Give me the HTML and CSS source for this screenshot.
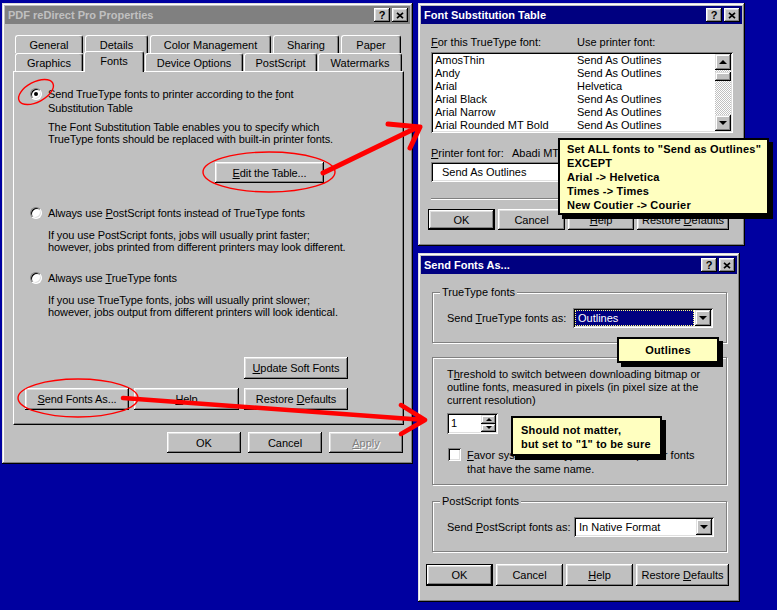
FILE: index.html
```html
<!DOCTYPE html>
<html>
<head>
<meta charset="utf-8">
<title>Font settings</title>
<link rel="stylesheet" href="styles.css">
</head>
<body>

<div class="win w-props">
  <div class="titlebar inactive">
    <span class="t">PDF reDirect Pro Properties</span>
    <span class="tbtn">?</span>
    <span class="tbtn x"><svg width="8" height="7" viewBox="0 0 8 7"><path d="M1 0.8L7 6.2M7 0.8L1 6.2" stroke="#000" stroke-width="1.7"/></svg></span>
  </div>
  <div class="tabrow r1">
    <div class="tab tw-general">General</div>
    <div class="tab tw-details">Details</div>
    <div class="tab tw-color">Color Management</div>
    <div class="tab tw-sharing">Sharing</div>
    <div class="tab tw-paper">Paper</div>
  </div>
  <div class="tabrow r2">
    <div class="tab tw-graphics">Graphics</div>
    <div class="tab sel tw-fonts">Fonts</div>
    <div class="tab tw-device">Device Options</div>
    <div class="tab tw-ps">PostScript</div>
    <div class="tab tw-wm">Watermarks</div>
  </div>
  <div class="panel">
    <div class="opt">
      <span class="radio on"><span class="dot"></span></span>
      <span>Send TrueType fonts to printer according to the <u>f</u>ont<br>Substitution Table</span>
    </div>
    <div class="desc d1">The Font Substitution Table enables you to specify which<br>TrueType fonts should be replaced with built-in printer fonts.</div>
    <div class="btn b-edit"><span><u>E</u>dit the Table...</span></div>

    <div class="opt o2">
      <span class="radio"></span>
      <span>Always use <u>P</u>ostScript fonts instead of TrueType fonts</span>
    </div>
    <div class="desc d2">If you use PostScript fonts, jobs will usually print faster;<br>however, jobs printed from different printers may look different.</div>

    <div class="opt o3">
      <span class="radio"></span>
      <span>Always use <u>T</u>rueType fonts</span>
    </div>
    <div class="desc d2">If you use TrueType fonts, jobs will usually print slower;<br>however, jobs output from different printers will look identical.</div>

    <div class="pbtns">
      <div class="btn c3"><span><u>U</u>pdate Soft Fonts</span></div>
      <div class="btn"><span><u>S</u>end Fonts As...</span></div>
      <div class="btn"><span><u>H</u>elp</span></div>
      <div class="btn"><span>Restore <u>D</u>efaults</span></div>
    </div>
  </div>
  <div class="dlgbtns">
    <div class="btn b75">OK</div>
    <div class="btn b75">Cancel</div>
    <div class="btn b75 dis"><span><u>A</u>pply</span></div>
  </div>
</div>

<div class="win w-fst">
  <div class="titlebar">
    <span class="t">Font Substitution Table</span>
    <span class="tbtn">?</span>
    <span class="tbtn x"><svg width="8" height="7" viewBox="0 0 8 7"><path d="M1 0.8L7 6.2M7 0.8L1 6.2" stroke="#000" stroke-width="1.7"/></svg></span>
  </div>
  <div class="fst-body">
    <div class="cols"><span class="c1"><u>F</u>or this TrueType font:</span><span>Use printer font:</span></div>
    <div class="list sunk">
      <div class="rows">
        <div class="lrow"><span class="lc1">AmosThin</span><span>Send As Outlines</span></div>
        <div class="lrow"><span class="lc1">Andy</span><span>Send As Outlines</span></div>
        <div class="lrow"><span class="lc1">Arial</span><span>Helvetica</span></div>
        <div class="lrow"><span class="lc1">Arial Black</span><span>Send As Outlines</span></div>
        <div class="lrow"><span class="lc1">Arial Narrow</span><span>Send As Outlines</span></div>
        <div class="lrow"><span class="lc1">Arial Rounded MT Bold</span><span>Send As Outlines</span></div>
      </div>
      <div class="sb">
        <div class="sbb"><span class="tri up"></span></div>
        <div class="track"><div class="thumb"></div></div>
        <div class="sbb"><span class="tri"></span></div>
      </div>
    </div>
    <div class="pf-row"><span class="pf1"><u>P</u>rinter font for:</span><span>Abadi MT</span></div>
    <div class="combo sunk">
      <span class="f">Send As Outlines</span>
      <span class="arr"><span class="tri"></span></span>
    </div>
    <div class="sep"></div>
    <div class="fbtns">
      <div class="btn def w67">OK</div>
      <div class="btn w67">Cancel</div>
      <div class="btn w66"><span><u>H</u>elp</span></div>
      <div class="btn w92"><span>Restore <u>D</u>efaults</span></div>
    </div>
  </div>
</div>

<div class="win w-sfa">
  <div class="titlebar">
    <span class="t">Send Fonts As...</span>
    <span class="tbtn">?</span>
    <span class="tbtn x"><svg width="8" height="7" viewBox="0 0 8 7"><path d="M1 0.8L7 6.2M7 0.8L1 6.2" stroke="#000" stroke-width="1.7"/></svg></span>
  </div>
  <div class="grp g1">
    <span class="glabel">TrueType fonts</span>
    <div class="grow">
      <span class="gl1">Send <u>T</u>rueType fonts as:</span>
      <div class="dd sunk">
        <span class="f sel">Outlines</span>
        <span class="arr"><span class="tri"></span></span>
      </div>
    </div>
  </div>
  <div class="grp g2">
    <div class="thr">T<u>h</u>reshold to switch between downloading bitmap or<br>outline fonts, measured in pixels (in pixel size at the<br>current resolution)</div>
    <div class="spin sunk">
      <span class="sp-val">1</span>
      <span class="sp-btns">
        <span class="spb"><span class="tri sm up"></span></span>
        <span class="spb"><span class="tri sm"></span></span>
      </span>
    </div>
    <div class="chk">
      <span class="cb sunk"></span>
      <span><u>F</u>avor system TrueType fonts over printer fonts<br>that have the same name.</span>
    </div>
  </div>
  <div class="grp g3">
    <span class="glabel">PostScript fonts</span>
    <div class="grow">
      <span class="gl1">Send <u>P</u>ostScript fonts as:</span>
      <div class="dd sunk">
        <span class="f">In Native Format</span>
        <span class="arr"><span class="tri"></span></span>
      </div>
    </div>
  </div>
  <div class="sbtns">
    <div class="btn def w67">OK</div>
    <div class="btn w67">Cancel</div>
    <div class="btn w67"><span><u>H</u>elp</span></div>
    <div class="btn w93"><span>Restore <u>D</u>efaults</span></div>
  </div>
</div>

<div class="tip tip1">Set ALL fonts to "Send as Outlines"<br>EXCEPT<br>Arial -&gt; Helvetica<br>Times -&gt; Times<br>New Coutier -&gt; Courier</div>
<div class="tip tip2">Should not matter,<br>but set to "1" to be sure</div>
<div class="tip tip3">Outlines</div>

<svg class="marks" width="777" height="610" viewBox="0 0 777 610">
  <g fill="none" stroke="#ff0000">
    <ellipse cx="36" cy="92" rx="19" ry="10" transform="rotate(-28 36 92)" stroke-width="1.4"/>
    <ellipse cx="269" cy="172" rx="66" ry="20" stroke-width="1.4"/>
    <ellipse cx="78" cy="398" rx="60" ry="19" stroke-width="1.4"/>
    <g stroke-linecap="round" stroke-linejoin="round">
      <path d="M323 173 L418 127 M388 124 L420 127 L410 148" stroke-width="5"/>
      <path d="M123 398 L425 420 M401 405 L425 420 L401 434" stroke-width="4.5"/>
    </g>
  </g>
</svg>

</body>
</html>
```

FILE: styles.css
```css
* { box-sizing: border-box; }
html, body { margin: 0; padding: 0; }
body {
  width: 777px;
  height: 610px;
  position: relative;
  overflow: hidden;
  background: #0000a0;
  font-family: "Liberation Sans", Arial, sans-serif;
  font-size: 11px;
  color: #000;
}
u { text-decoration: underline; text-underline-offset: 1px; }

/* windows */
.win {
  position: absolute;
  background: #c0c0c0;
  padding: 3px;
  box-shadow: inset -1px -1px #000, inset 1px 1px #dfdfdf, inset -2px -2px #808080, inset 2px 2px #fff;
}
.w-props { left: 2px; top: 3px; width: 411px; height: 461px; }
.w-fst { left: 418px; top: 3px; width: 327px; height: 243px; }
.w-sfa { left: 418px; top: 253px; width: 322px; height: 349px; }

.titlebar {
  height: 18px;
  display: flex;
  align-items: center;
  padding: 0 2px 0 3px;
  background: #000080;
  color: #fff;
  font-weight: bold;
  font-size: 11px;
}
.titlebar.inactive { background: #808080; color: #c0c0c0; }
.titlebar .t { flex: 1; white-space: nowrap; }
.tbtn {
  width: 16px;
  height: 14px;
  display: flex;
  align-items: center;
  justify-content: center;
  background: #c0c0c0;
  color: #000;
  font-weight: bold;
  font-size: 11px;
  line-height: 14px;
  box-shadow: inset -1px -1px #000, inset 1px 1px #fff, inset -2px -2px #808080, inset 2px 2px #dfdfdf;
}
.tbtn.x { margin-left: 2px; }

/* buttons */
.btn {
  height: 22px;
  display: flex;
  align-items: center;
  justify-content: center;
  background: #c0c0c0;
  white-space: nowrap;
  box-shadow: inset -1px -1px #000, inset 1px 1px #fff, inset -2px -2px #808080, inset 2px 2px #dfdfdf;
}
.btn.def { border: 1px solid #000; }
.btn.dis { color: #808080; text-shadow: 1px 1px #fff; }
.b75 { width: 74px; height: 21px; }
.w66 { width: 66px; }
.w67 { width: 67px; }
.w92 { width: 92px; }
.w93 { width: 93px; }

.sunk {
  background: #fff;
  box-shadow: inset 1px 1px #808080, inset -1px -1px #fff, inset 2px 2px #000, inset -2px -2px #dfdfdf;
}

/* tabs */
.tabrow { display: flex; height: 18px; margin-left: 10px; }
.tabrow.r1 { margin-top: 11px; gap: 2px; }
.tabrow.r2 { position: relative; z-index: 2; align-items: flex-start; }
.tab {
  height: 18px;
  display: flex;
  align-items: center;
  justify-content: center;
  background: #c0c0c0;
  border-top: 1px solid #fff;
  border-left: 1px solid #fff;
  border-right: 1px solid #000;
  border-radius: 3px 3px 0 0;
  box-shadow: inset -1px 0 #808080;
  white-space: nowrap;
}
.tab.sel { height: 21px; margin-top: -2px; padding-bottom: 3px; }
.tw-general, .tw-graphics { width: 68px; }
.tw-details { width: 63px; }
.tw-color { width: 121px; }
.tw-sharing { width: 66px; }
.tw-paper { width: 60px; }
.tw-fonts { width: 60px; margin-left: 1px; }
.tw-device { width: 98px; margin-left: 1px; }
.tw-ps { width: 73px; margin-left: 1px; }
.tw-wm { width: 84px; margin-left: 1px; }

.panel {
  position: relative;
  z-index: 1;
  margin-left: 8px;
  width: 391px;
  height: 354px;
  border-top: 1px solid #fff;
  border-left: 1px solid #fff;
  border-right: 1px solid #000;
  border-bottom: 1px solid #000;
  box-shadow: inset -1px -1px #808080;
  padding: 15px 0 0 16px;
  letter-spacing: -0.1px;
}
.opt { display: flex; align-items: flex-start; line-height: 14px; white-space: nowrap; }
.o2 { margin-top: 23px; }
.o3 { margin-top: 18px; }
.radio {
  flex: none;
  position: relative;
  width: 12px;
  height: 12px;
  margin: 1px 6px 0 0;
  border-radius: 50%;
  background: #fff;
  border: 1px solid;
  border-color: #808080 #fff #fff #808080;
  box-shadow: inset 1px 1px #000, inset -1px -1px #dfdfdf;
}
.radio .dot {
  position: absolute;
  left: 3px;
  top: 3px;
  width: 4px;
  height: 4px;
  border-radius: 50%;
  background: #000;
}
.desc { margin-left: 18px; line-height: 12px; white-space: nowrap; }
.d1 { margin-top: 6px; }
.d2 { margin-top: 9px; }
.b-edit { width: 109px; height: 21px; margin: 17px 0 0 185px; }

.pbtns {
  display: grid;
  grid-template-columns: 104px 105px 104px;
  grid-auto-rows: 22px;
  column-gap: 5px;
  row-gap: 9px;
  margin: 39px 0 0 -5px;
}
.pbtns .c3 { grid-column: 3; }

.dlgbtns { display: flex; justify-content: flex-end; gap: 7px; margin-top: 7px; padding-right: 7px; }

/* font substitution table */
.fst-body { padding-left: 10px; }
.cols { margin-top: 12px; display: flex; line-height: 13px; white-space: nowrap; }
.cols .c1 { width: 146px; }
.list { margin-top: 3px; width: 302px; height: 81px; display: flex; padding: 2px; overflow: hidden; }
.rows { flex: 1; overflow: hidden; }
.lrow { height: 13px; line-height: 13px; display: flex; padding-left: 2px; white-space: nowrap; }
.lc1 { width: 142px; }
.sb { width: 16px; display: flex; flex-direction: column; flex: none; }
.sbb {
  width: 16px; height: 16px; flex: none;
  display: flex; align-items: center; justify-content: center;
  background: #c0c0c0;
  box-shadow: inset -1px -1px #000, inset 1px 1px #dfdfdf, inset -2px -2px #808080, inset 2px 2px #fff;
}
.track {
  flex: 1;
  padding-top: 2px;
  background: repeating-conic-gradient(#c0c0c0 0 25%, #fff 0 50%) 0 0 / 2px 2px;
}
.thumb {
  height: 9px;
  background: #c0c0c0;
  box-shadow: inset -1px -1px #000, inset 1px 1px #dfdfdf, inset -2px -2px #808080, inset 2px 2px #fff;
}
.tri {
  width: 0; height: 0;
  border-left: 4px solid transparent;
  border-right: 4px solid transparent;
  border-top: 4px solid #000;
}
.tri.up { border-top: 0; border-bottom: 4px solid #000; }
.tri.sm { border-left-width: 3px; border-right-width: 3px; border-top-width: 3px; }
.tri.sm.up { border-top-width: 0; border-bottom-width: 3px; }

.pf-row { margin-top: 14px; display: flex; line-height: 13px; white-space: nowrap; }
.pf1 { width: 81px; }
.combo { margin-top: 2px; width: 302px; height: 20px; display: flex; padding: 2px; }
.combo .f, .dd .f { flex: 1; line-height: 16px; white-space: nowrap; }
.combo .f { padding-left: 9px; }
.arr {
  width: 16px; height: 16px; flex: none;
  display: flex; align-items: center; justify-content: center;
  background: #c0c0c0;
  box-shadow: inset -1px -1px #000, inset 1px 1px #dfdfdf, inset -2px -2px #808080, inset 2px 2px #fff;
}
.sep { margin-top: 16px; width: 302px; height: 2px; border-top: 1px solid #808080; border-bottom: 1px solid #fff; }
.fbtns { display: flex; gap: 3px; margin: 9px 0 0 -3px; }
.fbtns .btn { height: 21px; }

/* send fonts as */
.grp {
  position: relative;
  margin-left: 11px;
  width: 295px;
  border: 1px solid #808080;
  box-shadow: inset 1px 1px #fff, 1px 1px #fff;
}
.glabel {
  position: absolute;
  left: 7px;
  top: -7px;
  padding: 0 2px;
  line-height: 13px;
  background: #c0c0c0;
  white-space: nowrap;
}
.g1 { margin-top: 18px; height: 51px; }
.g2 { margin-top: 14px; height: 128px; padding: 10px 0 0 14px; }
.g3 { margin-top: 16px; height: 51px; }
.grow { display: flex; align-items: center; margin-top: 15px; padding-left: 14px; white-space: nowrap; }
.gl1 { width: 126px; }
.g3 .gl1 { width: 127px; }
.dd { width: 140px; height: 20px; display: flex; padding: 2px; }
.dd .f { padding-left: 3px; }
.dd .f.sel { background: #000080; color: #fff; outline: 1px dotted #ffff80; outline-offset: -1px; margin-right: 1px; }
.thr { line-height: 13px; white-space: nowrap; }
.spin { margin-top: 6px; width: 51px; height: 21px; display: flex; padding: 2px; }
.sp-val { flex: 1; line-height: 17px; padding-left: 2px; }
.sp-btns { width: 15px; display: flex; flex-direction: column; }
.spb {
  flex: 1;
  display: flex; align-items: center; justify-content: center;
  background: #c0c0c0;
  box-shadow: inset -1px -1px #000, inset 1px 1px #dfdfdf, inset -2px -2px #808080, inset 2px 2px #fff;
}
.chk { display: flex; align-items: flex-start; margin-top: 14px; line-height: 14px; white-space: nowrap; }
.cb { width: 13px; height: 13px; flex: none; margin: 0 6px 0 1px; }
.sbtns { display: flex; gap: 3px; margin: 12px 0 0 5px; }

/* annotations */
.tip {
  position: absolute;
  z-index: 5;
  background: #ffffc0;
  border: 2px solid #000;
  box-shadow: 4px 4px 0 #000;
  font-weight: bold;
  font-size: 11px;
  letter-spacing: 0.2px;
  line-height: 14px;
  white-space: nowrap;
}
.tip1 { left: 558px; top: 138px; width: 211px; height: 77px; padding: 2px 0 0 7px; }
.tip2 { left: 511px; top: 416px; width: 151px; height: 40px; padding: 5px 0 0 8px; }
.tip3 { left: 617px; top: 337px; width: 102px; height: 26px; text-align: center; line-height: 22px; }
.marks { position: absolute; left: 0; top: 0; z-index: 10; pointer-events: none; }
```
